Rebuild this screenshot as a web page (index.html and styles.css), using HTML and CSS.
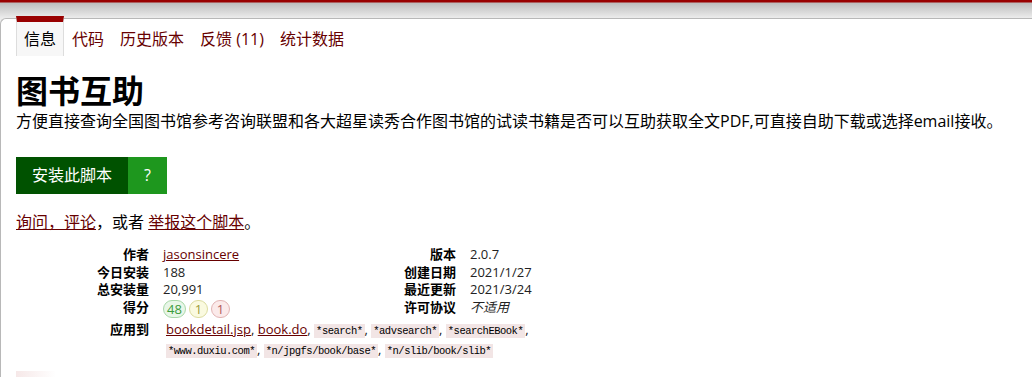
FILE: index.html
```html
<!DOCTYPE html>
<html lang="zh-CN">
<head>
    <meta charset="UTF-8">
    <meta name="viewport" content="width=device-width, initial-scale=1.0">
    <title>图书互助</title>
    <link rel="stylesheet" href="styles.css">
</head>
<body>
    <div class="topbar"></div>

    <div class="script-info">
        <ul class="script-links">
            <li class="current"><span>信息</span></li>
            <li><a href="#">代码</a></li>
            <li><a href="#">历史版本</a></li>
            <li><a href="#">反馈 (11)</a></li>
            <li><a href="#">统计数据</a></li>
        </ul>

        <h2 class="title">图书互助</h2>
        <p class="description">方便直接查询全国图书馆参考咨询联盟和各大超星读秀合作图书馆的试读书籍是否可以互助获取全文PDF,可直接自助下载或选择email接收。</p>

        <div class="install-area">
            <a class="install-link" href="#">安装此脚本</a>
            <a class="install-help" href="#">?</a>
        </div>

        <p class="feedback"><a href="#">询问，评论</a>，或者 <a href="#">举报这个脚本</a>。</p>

        <dl class="script-stats">
            <dt>作者</dt>
            <dd><a href="#">jasonsincere</a></dd>
            <dt>版本</dt>
            <dd>2.0.7</dd>

            <dt>今日安装</dt>
            <dd>188</dd>
            <dt>创建日期</dt>
            <dd>2021/1/27</dd>

            <dt>总安装量</dt>
            <dd>20,991</dd>
            <dt>最近更新</dt>
            <dd>2021/3/24</dd>

            <dt>得分</dt>
            <dd class="ratings">
                <span class="rating good">48</span>
                <span class="rating ok">1</span>
                <span class="rating bad">1</span>
            </dd>
            <dt>许可协议</dt>
            <dd><i>不适用</i></dd>

            <dt class="applies">应用到</dt>
            <dd class="applies-to">
                <a href="#">bookdetail.jsp</a>, <a href="#">book.do</a>, <code>*search*</code>, <code>*advsearch*</code>, <code>*searchEBook*</code>, <code>*www.duxiu.com*</code>, <code>*n/jpgfs/book/base*</code>, <code>*n/slib/book/slib*</code>
            </dd>
        </dl>

        <div class="next-section"></div>
    </div>
</body>
</html>
```

FILE: styles.css
```css
html, body {
    margin: 0;
    padding: 0;
}

body {
    background-color: #ececec;
    font-family: "Open Sans", "Noto Sans CJK SC", sans-serif;
    color: #000;
    overflow: hidden;
}

a {
    color: #670000;
}

.topbar {
    height: 18px;
    background: linear-gradient(to bottom, #990000 0, #990000 2px, #bdbdbd 3px, #ececec 18px);
}

.script-info {
    background-color: #fff;
    border-top: 1px solid #b8b8b8;
    border-left: 1px solid #b8b8b8;
    border-top-left-radius: 6px;
    padding: 0 0 20px 15px;
}

/* tabs */
.script-links {
    list-style: none;
    display: flex;
    margin: -3px 0 0 0;
    padding: 0;
    font-size: 16px;
    line-height: 20px;
}

.script-links li {
    border-top: 6px solid transparent;
    padding: 7px 8px;
}

.script-links li a {
    text-decoration: none;
}

.script-links li.current {
    border-top-color: #990000;
    border-left: 1px solid #ddd;
    border-right: 1px solid #ddd;
    background-color: #f7f7f7;
    padding: 7px 7px;
}

.title {
    margin: 16px 0 0 0;
    font-size: 32px;
    line-height: 38px;
    font-weight: bold;
}

.description {
    margin: 0;
    font-size: 16px;
    line-height: 22px;
}

.install-area {
    display: flex;
    margin-top: 25px;
}

.install-link, .install-help {
    color: #fff;
    text-decoration: none;
    font-size: 16px;
    line-height: 21px;
    padding: 8px 16px;
}

.install-link {
    background-color: #005200;
}

.install-help {
    background-color: #1e971e;
    padding: 8px 16px;
}

.feedback {
    margin: 17px 0 0 0;
    font-size: 16px;
    line-height: 22px;
}

/* stats table */
.script-stats {
    display: grid;
    grid-template-columns: 133px 146px 133px 1fr;
    column-gap: 14px;
    margin: 13px 0 0 0;
    font-size: 13px;
    line-height: 17.5px;
}

.script-stats dt {
    font-weight: bold;
    text-align: right;
}

.script-stats dd {
    margin: 0;
    color: #222;
}

.script-stats .ratings {
    display: flex;
    align-items: center;
    gap: 3px;
    height: 20px;
}

.script-stats dt.applies {
    line-height: 20px;
}

.script-stats .applies-to {
    grid-column: 2 / 5;
    max-width: 400px;
    line-height: 20px;
    padding-left: 3px;
}

.rating {
    display: inline-block;
    min-width: 11px;
    padding: 0 3px;
    line-height: 16px;
    border: 1px solid;
    border-radius: 10px;
    text-align: center;
}

.rating.good {
    background-color: #e8f6e8;
    border-color: #a8d8a8;
    color: #3c9c3c;
}

.rating.ok {
    background-color: #fafae0;
    border-color: #dcdca0;
    color: #9a9a3a;
}

.rating.bad {
    background-color: #fbeaea;
    border-color: #e2b4b4;
    color: #b05a5a;
}

code {
    font-family: "Liberation Mono", monospace;
    font-size: 10.5px;
    line-height: 12px;
    letter-spacing: -0.5px;
    background-color: #f2e5e5;
    padding: 1px 2px;
    color: #000;
}

.next-section {
    margin-top: 12px;
    width: 40px;
    height: 12px;
    background: linear-gradient(to right, #f6e8e8, #fff);
}
```
